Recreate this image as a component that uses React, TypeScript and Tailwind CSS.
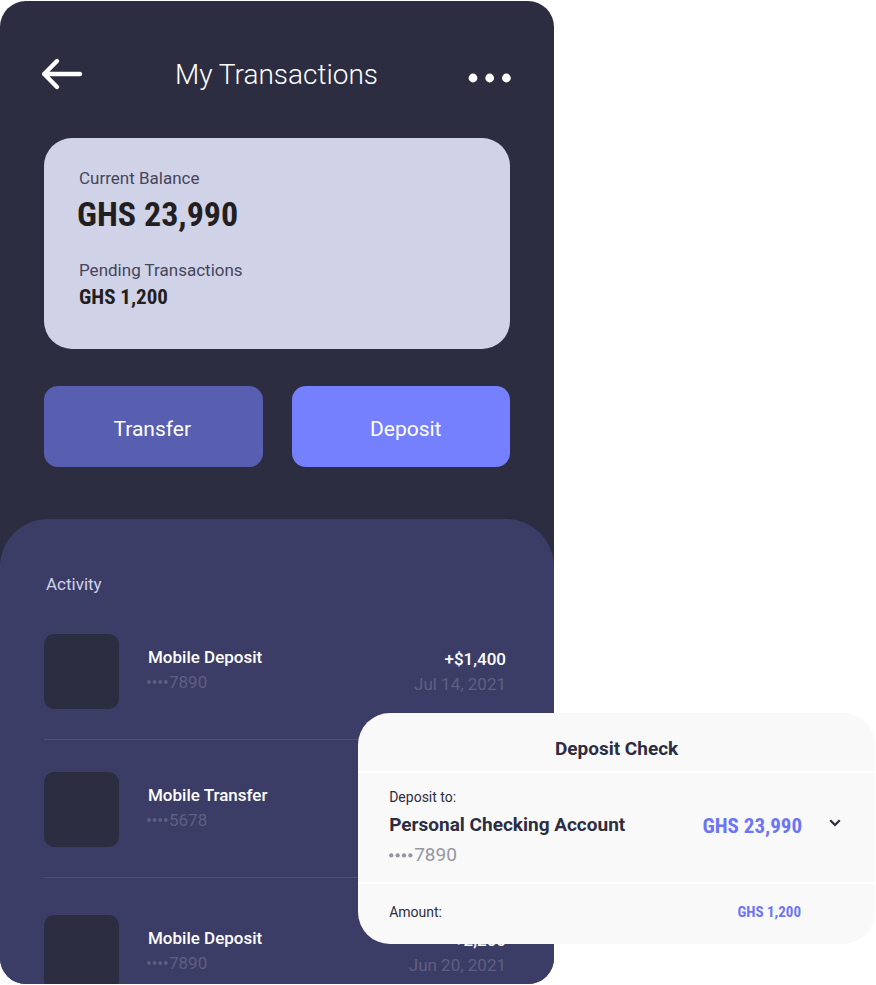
type Activity = {
  title: string;
  account: string;
  amount: string;
  date: string;
};

const activities: Activity[] = [
  { title: "Mobile Deposit", account: "7890", amount: "+$1,400", date: "Jul 14, 2021" },
  { title: "Mobile Transfer", account: "5678", amount: "-$850", date: "Jul 2, 2021" },
  { title: "Mobile Deposit", account: "7890", amount: "+2,200", date: "Jun 20, 2021" },
];

const narrow = "font-['Roboto_Condensed','Arial_Narrow',Roboto,sans-serif] font-bold";

function MaskDots({ className = "w-[22px]" }: { className?: string }) {
  return (
    <svg className={className} viewBox="0 0 22 6" fill="currentColor" aria-hidden="true">
      <circle cx="2" cy="3" r="1.9" />
      <circle cx="7.6" cy="3" r="1.9" />
      <circle cx="13.2" cy="3" r="1.9" />
      <circle cx="18.8" cy="3" r="1.9" />
    </svg>
  );
}

function Header() {
  return (
    <header className="flex items-center justify-between pt-[54px] pr-[42px] pl-[41px]">
      <button type="button" aria-label="Back" className="text-white">
        <svg width="42" height="34" viewBox="0 0 42 34" fill="none" stroke="currentColor" strokeWidth="4.4" strokeLinecap="round" strokeLinejoin="round" aria-hidden="true">
          <path d="M39 17H3.200M16 4L3.200 17L16 30" />
        </svg>
      </button>
      <h1 className="pt-[2px] pl-[2px] text-[28px] leading-9 font-light text-white">My Transactions</h1>
      <button type="button" aria-label="More options" className="pt-2 text-white">
        <svg width="44" height="10" viewBox="0 0 44 10" fill="currentColor" aria-hidden="true">
          <circle cx="5" cy="5" r="4.4" />
          <circle cx="21.7" cy="5" r="4.4" />
          <circle cx="38.4" cy="5" r="4.4" />
        </svg>
      </button>
    </header>
  );
}

function BalanceCard() {
  return (
    <section className="mx-11 mt-[45px] rounded-[28px] bg-[#d0d2e7] px-[35px] pt-[30px] pb-10 text-[#45455c]">
      <p className="text-[17px] leading-5">Current Balance</p>
      <p className={`${narrow} -ml-[2px] mt-1 text-[34px] leading-11 text-[#231f20]`}>GHS 23,990</p>
      <p className="mt-6 text-[17px] leading-5">Pending Transactions</p>
      <p className={`${narrow} mt-[5px] text-[21px] leading-6 text-[#231f20]`}>GHS 1,200</p>
    </section>
  );
}

function ActivityRow({ item }: { item: Activity }) {
  return (
    <li className="flex items-start border-b border-[#4e4e71] pt-8 pb-[30px] first:pt-0 last:border-0 last:pt-[37px]">
      <span className="size-[75px] shrink-0 rounded-[10px] bg-[#2d2d42]" />
      <div className="ml-7 flex-1 pt-[11px] text-[17px]">
        <p className="pl-px leading-6 font-medium text-white">{item.title}</p>
        <p className="mt-px flex items-center leading-6 text-[#5f5f82]">
          <MaskDots />
          {item.account}
        </p>
      </div>
      <div className="pt-[13px] pr-1 text-right text-[17px]">
        <p className="leading-6 font-medium text-white">{item.amount}</p>
        <p className="mt-px leading-6 text-[#5f5f82]">{item.date}</p>
      </div>
    </li>
  );
}

function DepositCheck() {
  return (
    <form className="absolute top-[713px] right-px w-[59%] rounded-[32px] bg-[#f9f9f9] text-[#2d2d42]">
      <h2 className="pt-6 pb-[10px] text-center text-[19px] leading-6 font-bold">Deposit Check</h2>
      <div className="border-y-2 border-white px-[31px] pt-4 pb-[15px]">
        <label htmlFor="account" className="block text-sm leading-4">Deposit to:</label>
        <div className="relative mt-[2px]">
          <select id="account" className="block h-9 w-full cursor-pointer appearance-none bg-transparent pr-40 text-[19px] font-bold outline-none">
            <option>Personal Checking Account</option>
          </select>
          <span className={`${narrow} pointer-events-none absolute top-[7px] right-[42px] text-[21px] leading-6 text-[#6b75f5]`}>GHS 23,990</span>
          <svg className="pointer-events-none absolute top-[10px] right-[2px]" width="14" height="12" viewBox="0 0 14 12" fill="none" stroke="currentColor" strokeWidth="2.2" strokeLinecap="square" aria-hidden="true">
            <path d="M3 4L7 8L11 4" />
          </svg>
        </div>
        <p className="flex items-center text-[19px] leading-6 text-[#96969f]">
          <MaskDots className="w-[25px]" />
          7890
        </p>
      </div>
      <div className="flex items-center justify-between pt-4 pr-[74px] pb-5 pl-[31px]">
        <label htmlFor="amount" className="text-sm leading-6">Amount:</label>
        <input id="amount" type="text" defaultValue="GHS 1,200" className={`${narrow} w-24 bg-transparent text-right text-[15px] leading-6 text-[#6b75f5] outline-none`} />
      </div>
    </form>
  );
}

export default function App() {
  return (
    <main className="relative mx-auto h-screen max-w-[876px] overflow-hidden bg-white py-px font-['Roboto',sans-serif]">
      <div className="flex h-full w-[554px] max-w-full flex-col overflow-hidden rounded-[26px] bg-[#2d2d42]">
        <Header />
        <BalanceCard />
        <div className="mx-11 mt-[37px] grid grid-cols-2 gap-[29px] text-[21px] text-white">
          <button type="button" className="h-[81px] rounded-[14px] bg-[#585eb0] pt-[6px] pr-[2px]">Transfer</button>
          <button type="button" className="h-[81px] rounded-[14px] bg-[#7580ff] pt-[6px] pl-[10px]">Deposit</button>
        </div>
        <section className="mt-[52px] flex-1 rounded-t-[48px] bg-[#3c3d66] px-11 pt-[53px]">
          <h2 className="pl-[2px] text-[17px] leading-6 text-[#d0d2e7]">Activity</h2>
          <ul className="mt-[38px]">
            {activities.map((item) => (
              <ActivityRow key={item.date} item={item} />
            ))}
          </ul>
        </section>
      </div>
      <DepositCheck />
    </main>
  );
}
